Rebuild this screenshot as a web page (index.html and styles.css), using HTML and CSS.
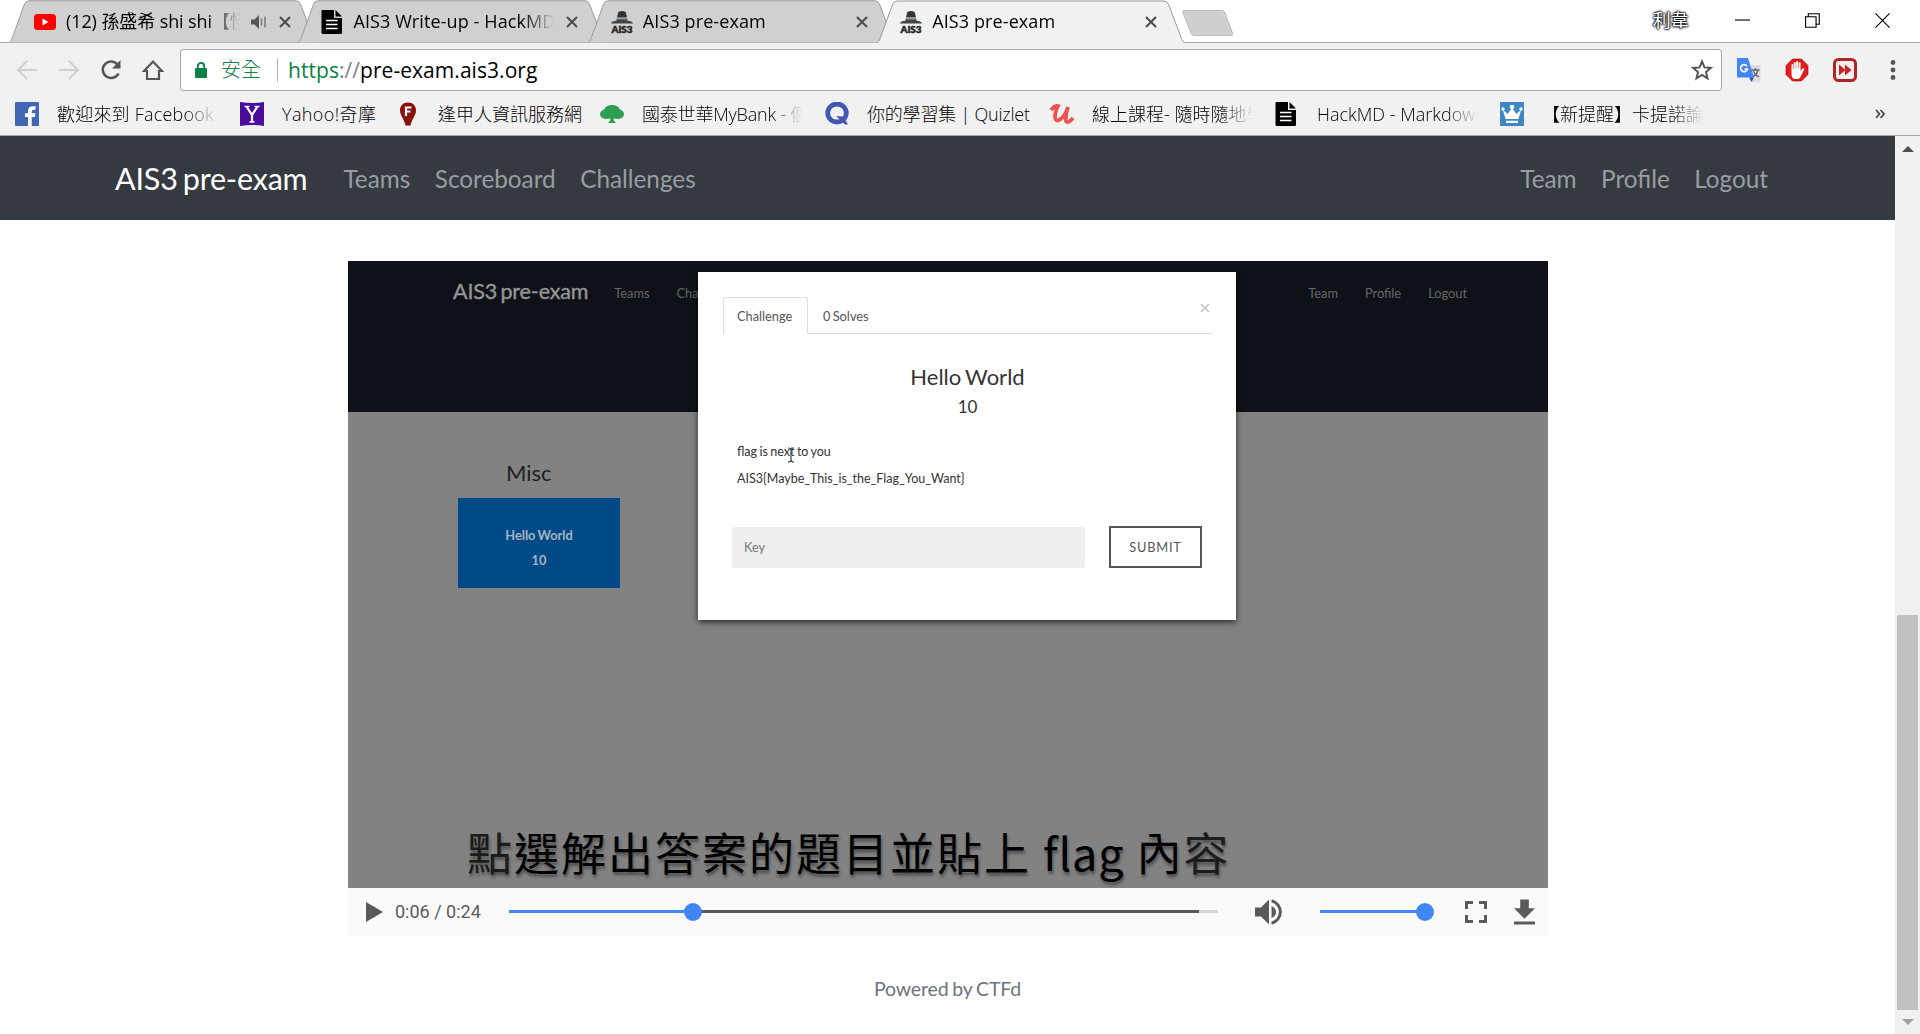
FILE: index.html
```html
<!DOCTYPE html>
<html lang="zh-Hant">
<head>
<meta charset="utf-8">
<title>AIS3 pre-exam</title>
<link rel="stylesheet" href="styles.css">
</head>
<body>
<svg class="defs" aria-hidden="true">
  <symbol id="tab-shape" viewBox="0 0 308 42"><path d="M0 42.5C2 41 2.500 40 3.500 37L15.500 4Q17 .5 20 .5H287Q290 .5 291.500 4L304.500 38Q306 42 308 42.500"/></symbol>
  <symbol id="close" viewBox="0 0 12 12"><path d="M1 1l10 10M11 1L1 11" stroke="#4a4a4a" stroke-width="2"/></symbol>
  <symbol id="doc" viewBox="0 0 22 24"><path fill="#000" d="M1 0h12v8h8v15q0 1-1 1H2q-1.500 0-1.500-1.500V1.500Q.5 0 1 0zM14.500 0L21 6.500h-6.500z"/><path d="M5 10.500h11.500M5 14.500h11.500M5 18.500h11.500" stroke="#fff" stroke-width="1.700"/></symbol>
  <symbol id="spy" viewBox="0 0 24 24"><path fill="#333" d="M8 1q4-2 8 0l1.500 6h-11z"/><path d="M6.300 8h11.400" stroke="#999" stroke-width="1.500"/><path fill="#444" d="M0 13.500Q0 11 6 10.500V9h12v1.500q6 .5 6 3z"/><text x="12" y="23.800" text-anchor="middle" textLength="23" lengthAdjust="spacingAndGlyphs" class="spy-text">AIS3</text></symbol>
</svg>

<header class="tabstrip">
  <div class="tab">
    <svg class="tab-bg"><use href="#tab-shape"/></svg>
    <svg class="favicon" viewBox="0 0 22 22"><rect y="3" width="22" height="16" rx="3.500" fill="#f00"/><path fill="#fff" d="M8.500 7.500l6 3.500-6 3.500z"/></svg>
    <span class="tab-title t1">(12) 孫盛希 shi shi【怪</span>
    <svg class="audio" viewBox="0 0 16 14"><path fill="#555" d="M0 4.500h3.500L8 0v14L3.500 9.500H0z"/><path d="M10.500 3.500v7M14 1.500v11" stroke="#777" stroke-width="1.500"/></svg>
    <svg class="tab-close"><use href="#close"/></svg>
  </div>
  <div class="tab">
    <svg class="tab-bg"><use href="#tab-shape"/></svg>
    <svg class="favicon"><use href="#doc"/></svg>
    <span class="tab-title t2">AIS3 Write-up - HackMD</span>
    <svg class="tab-close"><use href="#close"/></svg>
  </div>
  <div class="tab">
    <svg class="tab-bg"><use href="#tab-shape"/></svg>
    <svg class="favicon"><use href="#spy"/></svg>
    <span class="tab-title t3">AIS3 pre-exam</span>
    <svg class="tab-close"><use href="#close"/></svg>
  </div>
  <div class="tab active">
    <svg class="tab-bg"><use href="#tab-shape"/></svg>
    <svg class="favicon"><use href="#spy"/></svg>
    <span class="tab-title t3">AIS3 pre-exam</span>
    <svg class="tab-close"><use href="#close"/></svg>
  </div>
  <svg class="newtab" viewBox="0 0 52 26"><path d="M2.500.5H40q2 0 3 2.500l7.500 20q.8 2.500-1.500 2.500H12q-2 0-3-2.500L1 3Q.3.5 2.500.5z" fill="#cfcfcf" stroke="#bbb"/></svg>
  <span class="user">利韋</span>
  <svg class="winbtn" viewBox="0 0 16 16"><path d="M0 7.500h16" stroke="#000" stroke-width="1.200"/></svg>
  <svg class="winbtn" viewBox="0 0 16 16"><path d="M.6 4h11.200v11.200H.6zM3.500 4V.8h11.700V12h-3.400" fill="none" stroke="#000" stroke-width="1.200"/></svg>
  <svg class="winbtn" viewBox="0 0 16 16"><path d="M.5.5l15 15M15.500.5l-15 15" stroke="#000" stroke-width="1.200"/></svg>
</header>

<div class="toolbar">
  <svg class="nav-ic" viewBox="0 0 22 22"><path d="M21 11H2M11 2l-9 9 9 9" fill="none" stroke="#d0d0d0" stroke-width="2"/></svg>
  <svg class="nav-ic" viewBox="0 0 22 22"><path d="M1 11h19M11 2l9 9-9 9" fill="none" stroke="#d0d0d0" stroke-width="2"/></svg>
  <svg class="nav-ic" viewBox="0 0 22 22"><path d="M18.500 14.500A8.300 8.300 0 1 1 17.500 5.500" fill="none" stroke="#555" stroke-width="2.500"/><path fill="#555" d="M20.500 1v8.500H12z"/></svg>
  <svg class="nav-ic" viewBox="0 0 22 22"><path d="M2 12L11 2.500 20 12h-3v8H5v-8z" fill="none" stroke="#555" stroke-width="2.200"/></svg>
  <div class="omnibox">
    <svg class="lock" viewBox="0 0 12 16"><rect y="6" width="12" height="10" rx="1" fill="#0b8043"/><path d="M2.800 7V4.200a3.200 3.200 0 0 1 6.400 0V7" fill="none" stroke="#0b8043" stroke-width="1.800"/></svg>
    <span class="secure">安全</span>
    <span class="url"><span class="scheme">https</span><span class="sep">://</span>pre-exam.ais3.org</span>
    <svg class="star" viewBox="0 0 22 22"><path d="M11 2.500l2.500 5.900 6.300.5-4.800 4.200 1.500 6.300L11 16l-5.500 3.400L7 13.100 2.200 8.900l6.300-.5z" fill="none" stroke="#555" stroke-width="2"/></svg>
  </div>
  <svg class="ext" viewBox="0 0 24 24"><path fill="#dcdcdc" d="M11 7h12.500v17H14z"/><path d="M14.500 12h8M18.500 10v2M21 12q-1 5-6 7M16.500 13q1 3.500 5.500 6" stroke="#667" stroke-width="1.300" fill="none"/><path fill="#4285f4" d="M0 0h11l6 19.500H0z"/><path fill="#3457b5" d="M12 19.500h5L14.500 24z"/><path d="M10 8.200A3.500 3.500 0 1 0 10.500 11H7.500" stroke="#fff" stroke-width="1.700" fill="none"/></svg>
  <svg class="ext" viewBox="0 0 24 24"><path fill="#e21b1b" stroke="#b00" stroke-width=".6" d="M7.500 1h9L23 7.500v9L16.500 23h-9L1 16.500v-9z"/><path fill="#fff" d="M6.500 6.500q1-1 1.800 0V11h.5V4.500q1-1 1.900 0V10h.5V3.500q1-1 2 0V10h.5V4.700q1-1 1.900 0V13l2-2.500q1.500-.6 1.700.5l-3.300 7q-1 3-4 3h-1.500q-4 0-4-5z"/></svg>
  <svg class="ext" viewBox="0 0 24 24"><rect x="1.500" y="1.500" width="21" height="21" rx="4" fill="#f4eeee" stroke="#ad2727" stroke-width="3"/><path fill="#c62222" d="M6 6.500l6.500 5.500L6 17.500zM12 6.500l6.500 5.500-6.500 5.500z"/></svg>
  <svg class="menu-dots" viewBox="0 0 6 22"><g fill="#555"><circle cx="3" cy="3.500" r="2.400"/><circle cx="3" cy="11" r="2.400"/><circle cx="3" cy="18.500" r="2.400"/></g></svg>
</div>

<nav class="bookmarks">
  <div class="bm"><svg viewBox="0 0 24 24"><rect width="24" height="24" rx="1" fill="#4267b2"/><path fill="#fff" d="M13 24v-9h-3v-3.700h3V9q0-4.800 4.800-4.800h2.700v3.500h-2q-1.800 0-1.800 1.700v1.900h3.700l-.5 3.700h-3.200v9z"/></svg><span class="fade b1">歡迎來到 Facebook</span></div>
  <div class="bm"><svg viewBox="0 0 24 24"><path fill="#4a0d9e" d="M0 0q12 2 24 0v24q-12-2-24 0z"/><path d="M6.500 4.500L12 13v7M17.500 4.500L12 13" stroke="#fff" stroke-width="2.200" fill="none"/><path d="M4.500 4.500h5M14.500 4.500h5M9.500 20h5" stroke="#fff" stroke-width="1.400"/></svg><span class="b2">Yahoo!奇摩</span></div>
  <div class="bm"><svg viewBox="0 0 24 24"><path fill="#8b1010" d="M12 .5c5 0 8 3.500 8 8 0 5-4 8-5.500 15h-5C8 16.500 4 13.500 4 8.500c0-4.500 3-8 8-8z"/><path d="M10 14V5.500h5.500M10 9.500h4.500" stroke="#fff" stroke-width="2.200" fill="none"/></svg><span>逢甲人資訊服務網</span></div>
  <div class="bm"><svg viewBox="0 0 24 24"><path fill="#2f9e50" d="M12 3q6 0 8 4.500 4 1.500 4 5-.5 4-6 4.500l-4.500-.5q0 3 2.500 4.500H8q2.500-1.500 2.500-4.500L6 17q-5.500-.5-6-4.500 0-3.500 4-5Q6 3 12 3z"/></svg><span class="fade b4">國泰世華MyBank - 個人</span></div>
  <div class="bm"><svg viewBox="0 0 24 24"><ellipse cx="12" cy="11" rx="9.300" ry="9" fill="none" stroke="#4257b2" stroke-width="4.800"/><path d="M11 14l9 8.500h3l-5-8z" fill="#4257b2"/></svg><span class="b5">你的學習集 | Quizlet</span></div>
  <div class="bm"><svg viewBox="0 0 24 24"><path d="M1 8q4-5 7-4-2 3-3 10 0 6 4 4 6-3 9-13-3 9-2 14 2 3 7-3" fill="none" stroke="#eb5252" stroke-width="3.800"/></svg><span class="fade">線上課程- 隨時隨地學習</span></div>
  <div class="bm"><svg viewBox="0 0 24 24"><use href="#doc" width="22" height="24"/></svg><span class="fade">HackMD - Markdown</span></div>
  <div class="bm"><svg viewBox="0 0 24 24"><rect width="24" height="24" fill="#3f87c5"/><path fill="#fff" d="M3 8l4.500 4L12 6l4.500 6L21 8l-2.500 9h-13zM6 18.800h12V21H6z"/><g fill="#fff"><circle cx="3" cy="7" r="1.700"/><circle cx="12" cy="5" r="2.200"/><circle cx="21" cy="7" r="1.700"/></g></svg><span class="fade">【新提醒】卡提諾論壇</span></div>
  <svg class="overflow" viewBox="0 0 10 10"><path d="M1 1l3.500 4L1 9M5.500 1L9 5 5.500 9" fill="none" stroke="#444" stroke-width="1.700"/></svg>
</nav>

<div class="viewport">
  <div class="page">
    <nav class="navbar">
      <span class="brand">AIS3 pre-exam</span>
      <div class="links"><span>Teams</span><span>Scoreboard</span><span>Challenges</span></div>
      <div class="links right"><span>Team</span><span>Profile</span><span>Logout</span></div>
    </nav>
    <main class="player">
      <div class="frame">
        <div class="f-nav">
          <span class="f-brand">AIS3 pre-exam</span>
          <div class="f-links"><span>Teams</span><span>Challenges</span></div>
          <div class="f-links f-right"><span>Team</span><span>Profile</span><span>Logout</span></div>
        </div>
        <div class="f-body">
          <h3 class="f-cat">Misc</h3>
          <div class="f-card"><span>Hello World</span><span>10</span></div>
        </div>
        <section class="modal">
          <div class="m-tabs"><span class="m-tab">Challenge</span><span class="m-tab2">0 Solves</span></div>
          <svg class="m-close" viewBox="0 0 10 10"><path d="M1 1l8 8M9 1L1 9" stroke="#c4c4c4" stroke-width="1.700"/></svg>
          <h3>Hello World</h3>
          <h4>10</h4>
          <p>flag is next to you</p>
          <p>AIS3{Maybe_This_is_the_Flag_You_Want}</p>
          <div class="m-form"><div class="m-input">Key</div><div class="m-submit">SUBMIT</div></div>
          <svg class="ibeam" viewBox="0 0 8 16"><path d="M1 1q3 0 3 2 0-2 3-2M1 15q3 0 3-2 0 2 3 2M4 3v10" fill="none" stroke="#444" stroke-width="1.200"/></svg>
        </section>
        <div class="caption"><span class="dim">點</span>選解出答案的題目並貼上 <span class="latin">flag</span> 內<span class="dim">容</span></div>
      </div>
      <div class="controls">
        <svg class="play" viewBox="0 0 17 20"><path fill="#5a5a5a" d="M0 0l17 10L0 20z"/></svg>
        <span class="time">0:06 / 0:24</span>
        <div class="track"><i class="played"></i><i class="thumb"></i></div>
        <svg class="vol" viewBox="0 0 28 26"><path fill="#5a5a5a" d="M0 8.500h6L14 .5v25l-8-8H0z"/><path fill="#5a5a5a" d="M16.500 7q4.500 2 4.500 6t-4.500 6z"/><path d="M16.500 1.800A11.500 11.500 0 0 1 16.500 24.200" fill="none" stroke="#5a5a5a" stroke-width="3"/></svg>
        <div class="vtrack"><i class="thumb"></i></div>
        <svg class="full" viewBox="0 0 22 22"><path d="M1.500 8V1.500H8M14 1.500h6.500V8M20.500 14v6.500H14M8 20.500H1.500V14" fill="none" stroke="#5a5a5a" stroke-width="3"/></svg>
        <svg class="down" viewBox="0 0 22 26"><path fill="#5a5a5a" d="M6.500 0h9v9H22L11 20 0 9h6.500zM0 23h22v3H0z"/></svg>
      </div>
    </main>
    <footer>Powered by CTFd</footer>
  </div>
  <aside class="scrollbar">
    <svg class="arrow" viewBox="0 0 12 6"><path d="M0 6l6-6 6 6z" fill="#505050"/></svg>
    <div class="grip"></div>
    <svg class="arrow" viewBox="0 0 12 6"><path d="M0 0l6 6 6-6z" fill="#a0a0a0"/></svg>
  </aside>
</div>
</body>
</html>
```
FILE: styles.css
```css
* { box-sizing: border-box; }
body {
  margin: 0;
  width: 1920px;
  height: 1034px;
  overflow: hidden;
  background: #fff;
  font-family: "Open Sans", "Noto Sans CJK TC", sans-serif;
  color: #000;
  display: flex;
  flex-direction: column;
}
svg { display: block; flex: none; }
h3, h4, p { margin: 0; font-weight: 400; }
.defs { position: absolute; width: 0; height: 0; }
.spy-text { font: 900 10px Lato, sans-serif; fill: #222; stroke: #222; stroke-width: .5; }

/* tab strip */
.tabstrip {
  height: 43px;
  flex: none;
  display: flex;
  padding-left: 9px;
  box-shadow: inset 0 -1px #aaa;
}
.tab {
  position: relative;
  width: 308px;
  height: 43px;
  margin-right: -18.600px;
  padding-left: 23px;
  display: flex;
  align-items: center;
  flex: none;
}
.tab:first-child { padding-left: 25px; }
.tab-bg {
  position: absolute;
  left: 0;
  top: 0;
  width: 308px;
  height: 42.500px;
  fill: #d0d0d0;
  stroke: #999;
}
.tab.active { z-index: 1; }
.tab.active .tab-bg { fill: #f1f1f1; height: 43px; }
.favicon { position: relative; width: 22px; height: 24px; }
.tab-title {
  position: relative;
  width: 201px;
  margin: 0 0 2px 10px;
  font-size: 18px;
  line-height: 38px;
  letter-spacing: .1px;
  white-space: nowrap;
  overflow: hidden;
  -webkit-mask-image: linear-gradient(90deg, #000 calc(100% - 32px), transparent);
  mask-image: linear-gradient(90deg, #000 calc(100% - 32px), transparent);
}
.t1 { width: 174px; letter-spacing: -.1px; }
.audio { position: relative; width: 16px; height: 14px; margin-left: 11px; }
.tab-close { position: relative; width: 12px; height: 12px; margin-left: 12px; }
.newtab { width: 52px; height: 26px; margin: 10px 0 0 15px; }
.user {
  flex: none;
  margin: 8px 46px 0 419px;
  font-size: 18px;
  line-height: 24px;
  white-space: nowrap;
  color: #fff;
  text-shadow: 0 0 2px #000, 0 0 2px #000, 0 0 2px #000, 0 0 3px #000;
}
.winbtn { width: 15px; height: 15px; margin: 13px 55px 0 0; }

/* toolbar */
.toolbar {
  height: 51px;
  flex: none;
  background: #f1f1f1;
  display: flex;
  align-items: center;
  padding: 3px 24px 0 16px;
}
.nav-ic { width: 22px; height: 22px; margin-right: 20px; }
.omnibox {
  width: 1542px;
  height: 42px;
  margin-left: -4px;
  border: 1px solid #a8a8a8;
  border-radius: 3px;
  background: #fff;
  display: flex;
  align-items: center;
  padding: 0 8px 0 14px;
  font-size: 20px;
}
.lock { width: 12px; height: 16px; }
.secure { margin-left: 14px; padding-right: 16px; line-height: 24px; color: #0b8043; border-right: 1px solid #b5b5b5; font-weight: 300; }
.url { margin-left: 10px; font-size: 21px; letter-spacing: .05px; line-height: 38px; }
.scheme { color: #0b8043; }
.sep { color: #808080; }
.star { width: 22px; height: 22px; margin-left: auto; }
.ext { width: 24px; height: 24px; margin-left: 24px; }
.omnibox + .ext { margin-left: 15px; }
.menu-dots { width: 6px; height: 22px; margin-left: auto; }

/* bookmarks */
.bookmarks {
  height: 42px;
  flex: none;
  background: #f1f1f1;
  border-bottom: 1px solid #a8a8a8;
  display: flex;
  padding: 8px 35px 0 15px;
}
.bm { display: flex; flex: none; margin-right: 18px; line-height: 24px; font-size: 18px; font-weight: 300; }
.bm svg { width: 24px; height: 24px; margin-right: 18px; }
.bm span { display: block; white-space: nowrap; }
.bm .fade {
  width: 165px;
  overflow: hidden;
  -webkit-mask-image: linear-gradient(90deg, #000 calc(100% - 37px), transparent calc(100% - 4px));
  mask-image: linear-gradient(90deg, #000 calc(100% - 37px), transparent calc(100% - 4px));
}
.bm .b1 { letter-spacing: .2px; }
.bm .b2 { width: 96px; letter-spacing: .4px; }
.bm .b4 { letter-spacing: -.2px; }
.bm .b5 { width: 165px; letter-spacing: -.2px; }
.overflow { width: 10px; height: 10px; margin: 7px 0 0 auto; }

/* page */
.viewport { flex: 1; display: flex; font-family: Lato, "Noto Sans CJK TC", sans-serif; }
.page { width: 1895px; }
.navbar {
  height: 84px;
  background: #343a40;
  display: flex;
  align-items: center;
  padding: 0 127px 0 115px;
}
.brand { font-size: 30.500px; letter-spacing: -.2px; word-spacing: -2.500px; color: #fff; }
.links { display: flex; gap: 24.500px; margin-left: 36px; font-size: 24.300px; color: #9a9da0; }
.links.right { margin-left: auto; }

.player { width: 1200px; margin: 41px 0 0 348px; }
.frame { position: relative; height: 627px; background: #828282; }
.f-nav {
  height: 151px;
  background: #0e1117;
  display: flex;
  align-items: flex-start;
  padding: 15px 81px 0 105px;
}
.f-brand { font-size: 21.500px; line-height: 30px; letter-spacing: -.15px; word-spacing: -2px; color: #959595; -webkit-text-stroke: .4px #959595; }
.f-links { display: flex; gap: 27px; margin-left: 26px; font-size: 12.800px; line-height: 34px; color: #666; }
.f-right { margin-left: auto; }
.f-body { padding: 44px 0 0 110px; }
.f-cat { padding-left: 48px; font-size: 22px; line-height: 34px; color: #222; }
.f-card {
  width: 162px;
  height: 90px;
  margin-top: 8px;
  background: #004a88;
  color: #a8b4c0;
  font-size: 12.800px;
  font-weight: 700;
  line-height: 25px;
  word-spacing: -1px;
  display: flex;
  flex-direction: column;
  align-items: center;
  padding-top: 25px;
}
.modal {
  position: absolute;
  left: 350px;
  top: 11px;
  width: 538px;
  height: 348px;
  padding: 25px 24px 0 25px;
  background: #fff;
  box-shadow: 0 2px 6px rgba(0, 0, 0, .7);
  color: #333;
}
.m-tabs { height: 37px; display: flex; font-size: 12.800px; line-height: 36px; color: #555; box-shadow: inset 0 -1px #ddd; }
.m-tab { width: 85px; padding-left: 13px; border: 1px solid #ddd; border-bottom: 0; border-radius: 3px 3px 0 0; background: #fff; }
.m-tab2 { padding: 1px 0 0 15px; word-spacing: -1px; }
.m-close { position: absolute; right: 26px; top: 31px; width: 10px; height: 10px; }
.modal h3 { margin-top: 28px; font-size: 22px; line-height: 30px; text-align: center; word-spacing: -1.500px; }
.modal h4 { margin: 1px 0 17px; font-size: 17px; line-height: 28px; text-align: center; }
.modal p { padding-left: 14px; font-size: 12.500px; line-height: 27px; word-spacing: -.8px; }
.m-form { display: flex; gap: 24px; margin: 34px 0 0 9px; height: 42px; font-size: 12.800px; }
.m-input { width: 353px; height: 41px; margin-top: 1px; padding-left: 12px; line-height: 40px; background: #f0eef0; color: #777; border-radius: 2px; }
.m-submit { width: 93px; border: 2px solid #555; text-align: center; line-height: 39px; letter-spacing: .8px; color: #555; }
.ibeam { position: absolute; left: 89px; top: 175px; width: 8px; height: 16px; }
.caption {
  position: absolute;
  left: 119px;
  top: 555px;
  font-family: "Noto Sans CJK TC", sans-serif;
  font-size: 45px;
  line-height: 72px;
  letter-spacing: 2px;
  white-space: nowrap;
  text-shadow: 1px 3px 3px rgba(0, 0, 0, .4);
}
.latin { letter-spacing: .8px; }
.dim { color: #1c1c1c; }

.controls { height: 48px; background: #fafafa; display: flex; align-items: center; padding: 0 0 1px 18px; }
.play { width: 17px; height: 20px; }
.time { width: 94px; margin: 0 20px 0 12px; font: 18px Roboto, sans-serif; color: #5a5a5a; white-space: nowrap; flex: none; }
.track, .vtrack { position: relative; height: 3px; flex: none; }
.track { width: 709px; background: linear-gradient(90deg, #5a5a5a 690px, #d5d5d5 690px); }
.played { display: block; width: 184px; height: 3px; background: #4285f4; }
.thumb { position: absolute; top: -7.500px; width: 18px; height: 18px; border-radius: 50%; background: #4285f4; }
.track .thumb { left: 175px; }
.vol { width: 28px; height: 26px; margin-left: 37px; }
.vtrack { width: 105px; margin-left: 37px; background: #4285f4; }
.vtrack .thumb { right: -9px; }
.full { width: 22px; height: 22px; margin-left: 40px; }
.down { width: 21px; height: 26px; margin-left: 27px; }
footer { margin-top: 41px; text-align: center; font-size: 19.500px; line-height: 24px; letter-spacing: -.15px; word-spacing: -1px; color: #6c757d; }

.scrollbar { width: 25px; background: #f0f0f0; display: flex; flex-direction: column; align-items: center; padding: 10px 0 9px; }
.arrow { width: 12px; height: 6px; }
.grip { width: 21px; height: 395px; margin: auto 0 9px; background: #c1c1c1; }
```
